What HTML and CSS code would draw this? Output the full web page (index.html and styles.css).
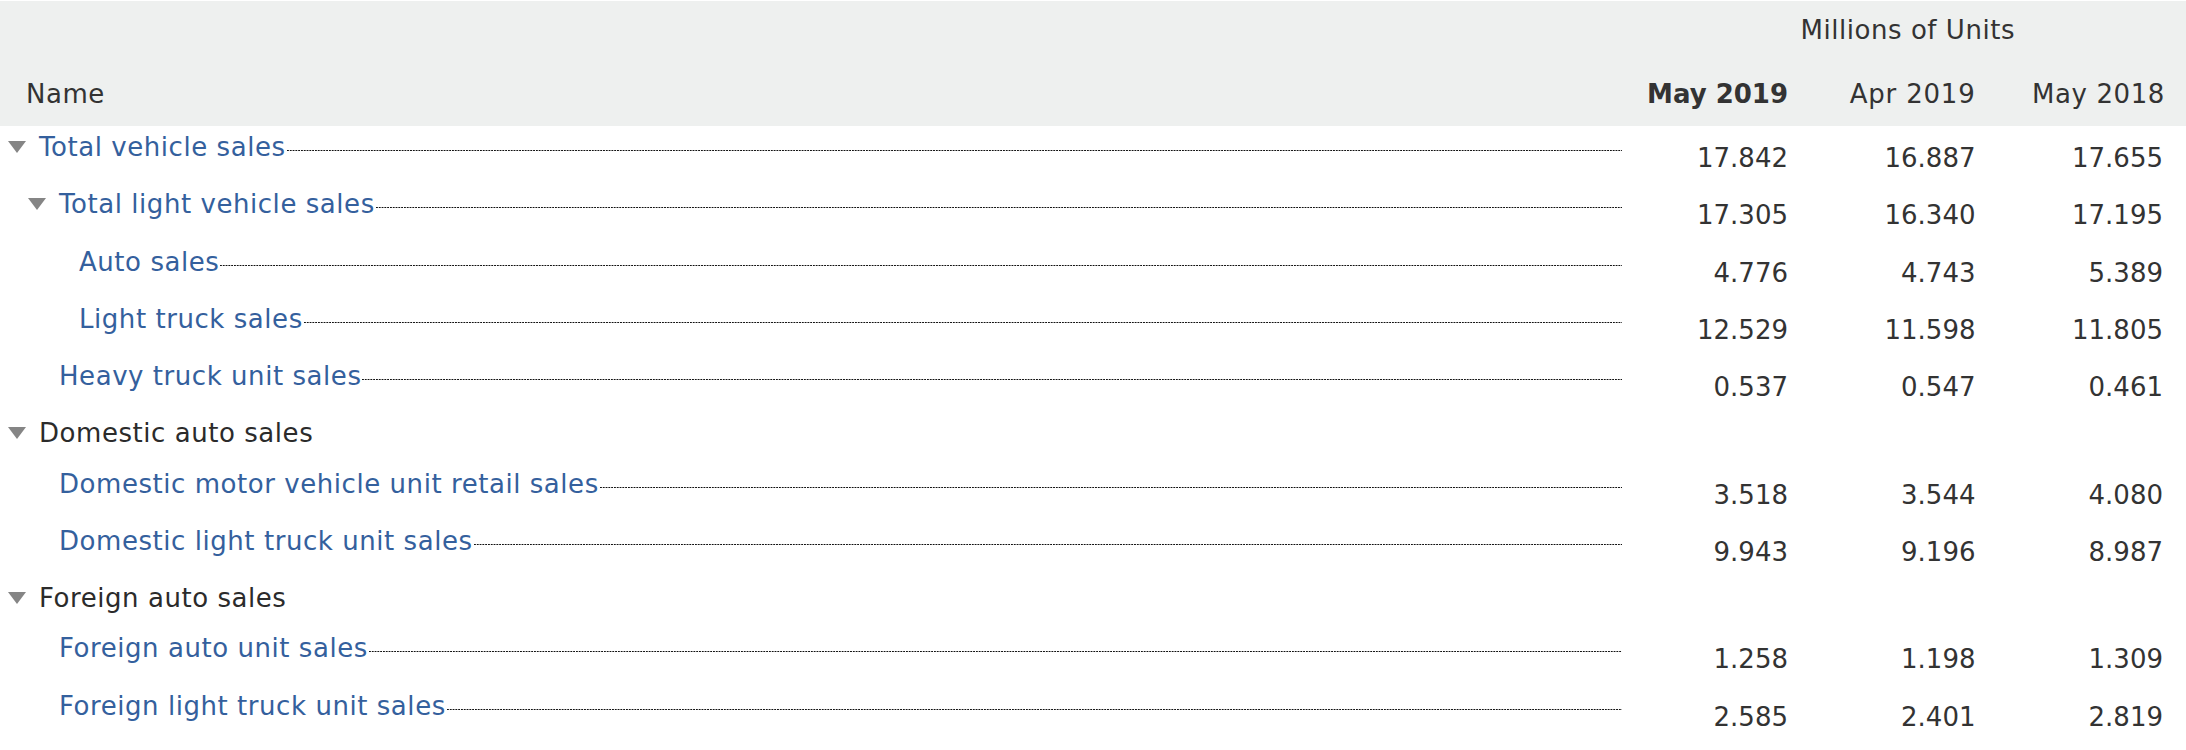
FILE: index.html
```html
<!DOCTYPE html>
<html lang="en">
<head>
<meta charset="utf-8">
<title>Vehicle sales</title>
<link rel="stylesheet" href="styles.css">
</head>
<body>
<div class="table">
  <div class="head">
    <div class="units">Millions of Units</div>
    <div class="hname">Name</div>
    <div class="hcol cur">May 2019</div>
    <div class="hcol">Apr 2019</div>
    <div class="hcol">May 2018</div>
  </div>

  <div class="row">
    <div class="name l0"><span class="tog"><svg viewBox="0 0 18 12" width="18" height="12"><path d="M0 0H18L9 12Z"/></svg></span><a class="lbl">Total vehicle sales</a><span class="lead"></span></div>
    <div class="val">17.842</div><div class="val">16.887</div><div class="val">17.655</div>
  </div>
  <div class="row">
    <div class="name l1"><span class="tog"><svg viewBox="0 0 18 12" width="18" height="12"><path d="M0 0H18L9 12Z"/></svg></span><a class="lbl">Total light vehicle sales</a><span class="lead"></span></div>
    <div class="val">17.305</div><div class="val">16.340</div><div class="val">17.195</div>
  </div>
  <div class="row">
    <div class="name l2"><span class="tog"></span><a class="lbl">Auto sales</a><span class="lead"></span></div>
    <div class="val">4.776</div><div class="val">4.743</div><div class="val">5.389</div>
  </div>
  <div class="row">
    <div class="name l2"><span class="tog"></span><a class="lbl">Light truck sales</a><span class="lead"></span></div>
    <div class="val">12.529</div><div class="val">11.598</div><div class="val">11.805</div>
  </div>
  <div class="row">
    <div class="name l1"><span class="tog"></span><a class="lbl">Heavy truck unit sales</a><span class="lead"></span></div>
    <div class="val">0.537</div><div class="val">0.547</div><div class="val">0.461</div>
  </div>
  <div class="row">
    <div class="name l0"><span class="tog"><svg viewBox="0 0 18 12" width="18" height="12"><path d="M0 0H18L9 12Z"/></svg></span><span class="grp">Domestic auto sales</span></div>
  </div>
  <div class="row">
    <div class="name l1"><span class="tog"></span><a class="lbl">Domestic motor vehicle unit retail sales</a><span class="lead"></span></div>
    <div class="val">3.518</div><div class="val">3.544</div><div class="val">4.080</div>
  </div>
  <div class="row">
    <div class="name l1"><span class="tog"></span><a class="lbl">Domestic light truck unit sales</a><span class="lead"></span></div>
    <div class="val">9.943</div><div class="val">9.196</div><div class="val">8.987</div>
  </div>
  <div class="row">
    <div class="name l0"><span class="tog"><svg viewBox="0 0 18 12" width="18" height="12"><path d="M0 0H18L9 12Z"/></svg></span><span class="grp">Foreign auto sales</span></div>
  </div>
  <div class="row">
    <div class="name l1"><span class="tog"></span><a class="lbl">Foreign auto unit sales</a><span class="lead"></span></div>
    <div class="val">1.258</div><div class="val">1.198</div><div class="val">1.309</div>
  </div>
  <div class="row">
    <div class="name l1"><span class="tog"></span><a class="lbl">Foreign light truck unit sales</a><span class="lead"></span></div>
    <div class="val">2.585</div><div class="val">2.401</div><div class="val">2.819</div>
  </div>
</div>
</body>
</html>
```
FILE: styles.css
```css
html, body {
  margin: 0;
  padding: 0;
  background: #ffffff;
}
body {
  padding-top: 1px;
  font-family: "DejaVu Sans", "Liberation Sans", sans-serif;
  font-size: 26px;
  letter-spacing: 0.55px;
  color: #333333;
}
.table {
  width: 2186px;
}
.head {
  display: grid;
  grid-template-columns: 1fr repeat(3, 187.5px);
  grid-template-rows: 36px 36px;
  row-gap: 28px;
  padding: 11px 0 14px 0;
  background: #eef0ef;
  line-height: 36px;
  color: #333333;
}
.units {
  grid-column: 2 / 5;
  text-align: center;
  padding-left: 6px;
}
.hname {
  grid-column: 1;
  padding-left: 26px;
}
.hcol {
  text-align: right;
  padding-right: 23px;
  letter-spacing: 0.8px;
}
.hcol.cur {
  font-weight: bold;
  letter-spacing: 0;
}
.hcol:last-child {
  padding-right: 21px;
  letter-spacing: 0.6px;
}
.row {
  display: grid;
  grid-template-columns: 1fr repeat(3, 187.5px);
  align-items: start;
  line-height: 36px;
}
.name {
  display: flex;
  align-items: stretch;
  padding: 3px 1.5px 11.25px 8px;
  white-space: nowrap;
}
.name.l1 { padding-left: 28px; }
.name.l2 { padding-left: 48px; }
.tog {
  flex: none;
  width: 31px;
  display: flex;
  align-items: center;
}
.tog svg {
  display: block;
  fill: #858585;
}
.lbl {
  color: #34609d;
  text-decoration: none;
  flex: none;
}
.grp {
  color: #2b2b2b;
}
.lead {
  flex: 1;
  min-width: 0;
  margin-left: 1px;
  background-image: linear-gradient(to right, #111111 1.4px, transparent 1.4px);
  background-size: 2.8px 1px;
  background-position: 0 21px;
  background-repeat: repeat-x;
}
.val {
  text-align: right;
  padding: 14px 23px 7.25px 0;
  letter-spacing: 0;
  color: #333333;
}
```
